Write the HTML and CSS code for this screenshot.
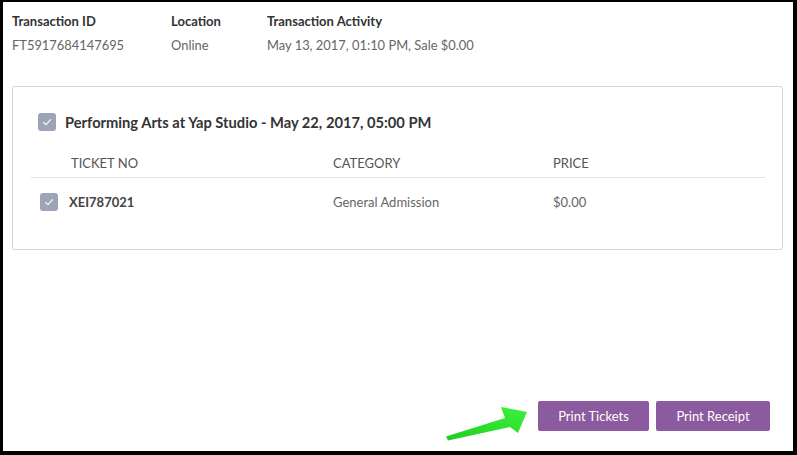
FILE: index.html
```html
<!DOCTYPE html>
<html>
<head>
<meta charset="utf-8">
<link rel="stylesheet" href="styles.css">
</head>
<body>
<div class="frame">
  <div class="summary">
    <div class="col col-id">
      <div class="label">Transaction ID</div>
      <div class="value">FT5917684147695</div>
    </div>
    <div class="col col-loc">
      <div class="label">Location</div>
      <div class="value">Online</div>
    </div>
    <div class="col">
      <div class="label">Transaction Activity</div>
      <div class="value">May 13, 2017, 01:10 PM, Sale $0.00</div>
    </div>
  </div>

  <div class="card">
    <div class="event">
      <span class="check"><svg viewBox="0 0 18 18" width="18" height="18"><path d="M5.5 9.3 L8 11.6 L12.6 6.6" fill="none" stroke="#fff" stroke-width="1.1" stroke-linecap="round" stroke-linejoin="round"/></svg></span>
      <span class="event-title">Performing Arts at Yap Studio - May 22, 2017, 05:00 PM</span>
    </div>
    <div class="table">
      <div class="thead">
        <div class="th th-ticket">TICKET NO</div>
        <div class="th">CATEGORY</div>
        <div class="th">PRICE</div>
      </div>
      <div class="trow">
        <div class="td td-ticket">
          <span class="check"><svg viewBox="0 0 18 18" width="18" height="18"><path d="M5.5 9.3 L8 11.6 L12.6 6.6" fill="none" stroke="#fff" stroke-width="1.1" stroke-linecap="round" stroke-linejoin="round"/></svg></span>
          <span class="ticket-no">XEI787021</span>
        </div>
        <div class="td">General Admission</div>
        <div class="td">$0.00</div>
      </div>
    </div>
  </div>

  <div class="actions">
    <button class="btn btn-tickets">Print Tickets</button>
    <button class="btn btn-receipt">Print Receipt</button>
  </div>

  <svg class="arrow" width="797" height="455" viewBox="0 0 797 455">
    <defs>
      <linearGradient id="ag" x1="0" y1="1" x2="1" y2="0">
        <stop offset="0" stop-color="#1fcf1f"/>
        <stop offset="1" stop-color="#3ef03e"/>
      </linearGradient>
    </defs>
    <polygon points="446,436.5 505,418 501,407 527,412 518,433 510,427 448,440.5" fill="url(#ag)"/>
  </svg>
</div>
</body>
</html>
```

FILE: styles.css
```css
* { box-sizing: border-box; }

html, body {
  margin: 0;
  padding: 0;
  background: #000;
}

body {
  font-family: Lato, "Open Sans", "Liberation Sans", sans-serif;
  font-size: 13px;
  color: #555;
}

.frame {
  position: relative;
  width: 797px;
  height: 455px;
  background: #fff;
  border-style: solid;
  border-color: #000;
  border-width: 2px 4px 4px 3px;
  display: flex;
  flex-direction: column;
}

.summary {
  display: flex;
  padding: 7px 0 0 9px;
}

.col-id { width: 159px; }
.col-loc { width: 96px; }

.label {
  font-weight: 700;
  color: #333;
  line-height: 24px;
}

.value {
  color: #666;
  line-height: 24px;
  font-size: 12.9px;
}

.card {
  margin: 29px 0 0 9px;
  width: 771px;
  height: 164px;
  border: 1px solid #d3d3d3;
  border-radius: 3px;
  padding: 26px 17px 0 18px;
}

.event {
  display: flex;
  align-items: center;
  padding-left: 7px;
  height: 18px;
}

.check {
  display: inline-flex;
  width: 18px;
  height: 18px;
  border-radius: 3px;
  background: #9ea4b7;
  flex: none;
}

.event-title {
  margin-left: 9px;
  font-size: 14.7px;
  font-weight: 700;
  color: #333;
}

.table {
  margin-top: 17px;
}

.thead, .trow {
  display: grid;
  grid-template-columns: 302px 220px 1fr;
  align-items: center;
}

.thead {
  height: 30px;
  border-bottom: 1px solid #e2e2e2;
}

.th {
  color: #555;
  font-size: 13px;
}

.th-ticket { padding-left: 40px; }

.trow {
  height: 48px;
}

.td { color: #666; }

.td-ticket {
  display: flex;
  align-items: center;
  padding-left: 9px;
}

.ticket-no {
  margin-left: 11px;
  font-weight: 700;
  color: #444;
}

.actions {
  margin-top: auto;
  display: flex;
  justify-content: flex-end;
  gap: 7px;
  padding: 0 23px 20px 0;
}

.btn {
  height: 30px;
  border: none;
  border-radius: 2px;
  background: #8c5a9e;
  color: #fff;
  font-family: Lato, "Open Sans", "Liberation Sans", sans-serif;
  font-size: 13px;
  padding: 0;
}

.btn-tickets { width: 111px; }
.btn-receipt { width: 114px; }

.arrow {
  position: absolute;
  left: -3px;
  top: -2px;
  pointer-events: none;
}
```
